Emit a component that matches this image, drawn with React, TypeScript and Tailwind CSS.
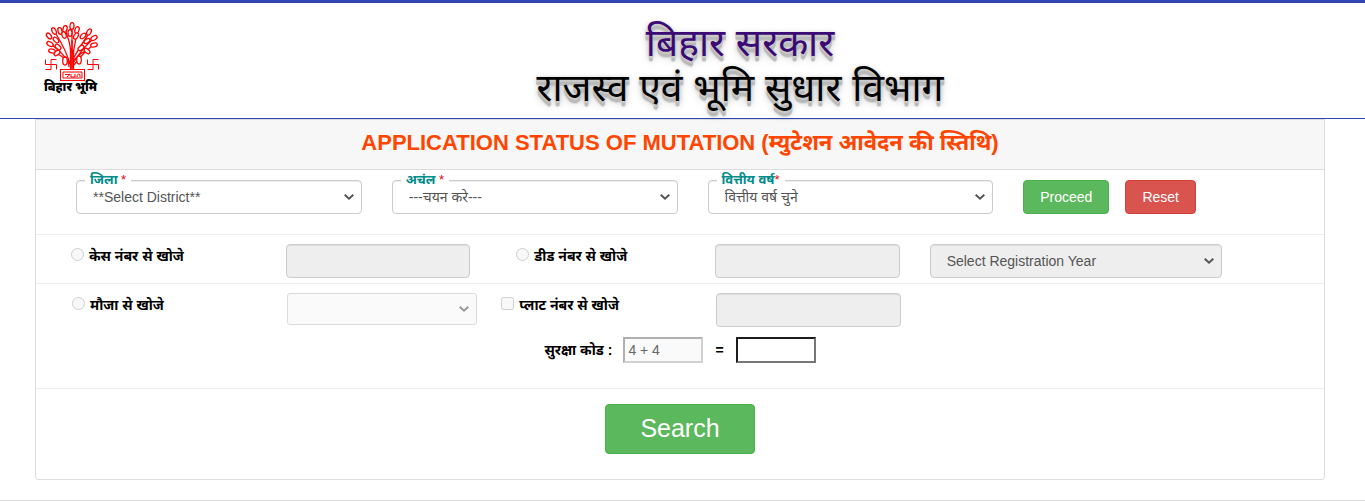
import type { ReactNode } from "react";

const control =
  "h-[34px] w-full rounded border border-[#ccc] px-3 text-sm text-[#555] shadow-[inset_0_1px_1px_rgba(0,0,0,0.075)]";

const leaves: [number, number, number][] = [
  [14, 9, -25], [9, 14, -40], [20, 9, -15], [25, 7, 15], [24, 13, -20], [32, 4, 5], [37, 8, 20],
  [36, 14, 30], [49, 10, 30], [43, 14, 45], [54, 16, 60], [47, 19, 55], [54, 23, 75],
  [10, 22, -60], [16, 18, -45], [12, 29, -75], [18, 25, -50], [47, 29, -50], [41, 26, 50],
  [17, 31, 50], [30, 11, 0],
];

function Logo() {
  return (
    <svg viewBox="0 0 60 72" className="h-[72px] w-[60px]" role="img" aria-label="बिहार भूमि">
      <g fill="none" stroke="#f00" strokeWidth="1.3">
        <path d="M29 45Q29 36 12 23M30 42Q26 28 16 12M31 30Q30 20 26 10M32 46V7M33 32Q35 22 37 10M33 37Q40 24 48 13M34 40Q41 28 52 18M34 43Q42 32 52 24M29 40Q22 34 13 29M34 38Q40 31 46 29" />
        {leaves.map(([x, y, a]) => (
          <ellipse key={`${x}-${y}`} cx={x} cy={y} rx="2" ry="3.400" fill="#fff" transform={`rotate(${a} ${x} ${y})`} />
        ))}
        <ellipse cx="25" cy="39" rx="2.300" ry="4" fill="#fff" />
        <ellipse cx="39" cy="38" rx="2.300" ry="4" fill="#fff" />
        <path d="M30.500 47V26M32 47V18M33.500 47V28" />
      </g>
      <g fill="none" stroke="#f00" strokeWidth="1">
        <rect x="20.500" y="47.500" width="24" height="11" />
        <path d="M23 50H42V56H23ZM25 52.500H30L27 55M31 52V55H35V52M37 55Q37 51 40 52.500V55" />
        <path d="M5.500 37.500V42.500H16.500V47.500M11 47.500V37.500H16.500M5.500 47.500H11" />
        <path d="M47.500 37.500V42.500H58.500V47.500M53 47.500V37.500H58.500M47.500 47.500H53" />
      </g>
      <text
        x="30.500"
        y="69"
        textAnchor="middle"
        fontSize="12"
        fontWeight="900"
        fontFamily="Noto Sans, sans-serif"
        fill="#000"
      >
        बिहार भूमि
      </text>
    </svg>
  );
}

function Chevron({ muted = false }: { muted?: boolean }) {
  return (
    <svg
      viewBox="0 0 10 7"
      aria-hidden="true"
      className={`pointer-events-none absolute top-1/2 right-2 h-[7px] w-[10px] -translate-y-1/2 ${muted ? "text-[#999]" : "text-[#555]"}`}
    >
      <path d="M0.700 1.200L5 5.200L9.300 1.200" fill="none" stroke="currentColor" strokeWidth="2" />
    </svg>
  );
}

function FloatingSelect({ id, label, star, option }: { id: string; label: string; star: string; option: string }) {
  return (
    <div className="relative">
      <label
        htmlFor={id}
        className="absolute -top-2 left-[9px] bg-white px-[5px] text-[13px] leading-4 font-bold text-[#008b8b]"
      >
        {label}
        <span className="font-normal text-red-600">{star}</span>
      </label>
      <select id={id} className={`${control} appearance-none bg-white pl-4`}>
        <option>{option}</option>
      </select>
      <Chevron />
    </div>
  );
}

function Choice({ id, type, children }: { id: string; type: "radio" | "checkbox"; children: ReactNode }) {
  return (
    <div className="flex items-start gap-[5px]">
      <input id={id} type={type} name={type === "radio" ? "searchBy" : id} disabled className="mt-1 size-[13px] shrink-0" />
      <label htmlFor={id} className="text-sm leading-6 font-bold whitespace-nowrap">
        {children}
      </label>
    </div>
  );
}

export default function App() {
  return (
    <div className="border-b border-[#ddd] bg-white pb-5 font-['Liberation_Sans','Noto_Sans',sans-serif] text-black">
      <header className="flex h-[119px] border-t-[3px] border-b border-t-[#2f43b5] border-b-[#2f43b5]">
        <div className="w-[115px] shrink-0 pt-[19px] pl-10">
          <Logo />
        </div>
        <h1 className="flex-1 pt-[17px] text-center text-[39px] leading-[45px] [text-shadow:0_1px_0_#ccc,0_2px_0_#c9c9c9,0_3px_0_#bbb,0_4px_0_#b9b9b9,0_5px_0_#bbb,0_6px_1px_rgba(0,0,0,.1),0_0_5px_rgba(0,0,0,.1),0_3px_5px_rgba(0,0,0,.2),0_5px_10px_rgba(0,0,0,.2)]">
          <span className="block text-[#3b0a75]">बिहार सरकार</span>
          <span className="block">राजस्व एवं भूमि सुधार विभाग</span>
        </h1>
      </header>

      <main className="mr-10 ml-[35px] rounded-b-[3px] border border-[#ddd]">
        <h2 className="h-[50px] border-b border-[#ddd] bg-[#f7f7f7] text-center text-[22px] leading-[46px] font-bold text-[#ff4500]">
          APPLICATION STATUS OF MUTATION (म्युटेशन आवेदन की स्तिथि)
        </h2>
        <form>
          <div className="grid grid-cols-4 gap-[30px] border-b border-[#eee] pt-[10px] pr-[15px] pb-5 pl-10">
            <FloatingSelect id="district" label="जिला" star=" *" option="**Select District**" />
            <FloatingSelect id="circle" label="अचंल" star=" *" option="---चयन करे---" />
            <FloatingSelect id="year" label="वित्तीय वर्ष" star="*" option="वित्तीय वर्ष चुने" />
            <div className="flex gap-4 text-sm text-white">
              <button type="button" className="h-[34px] rounded border border-[#4cae4c] bg-[#5cb85c] px-4">
                Proceed
              </button>
              <button type="reset" className="h-[34px] rounded border border-[#d43f3a] bg-[#d9534f] px-4">
                Reset
              </button>
            </div>
          </div>

          <div className="flex border-b border-[#eee] pt-[9px] pb-[5px]">
            <div className="ml-5 w-1/6 shrink-0 pl-[15px]">
              <Choice id="byCase" type="radio">केस नंबर से खोजे</Choice>
            </div>
            <div className="w-1/6 shrink-0 px-[15px]">
              <input aria-label="केस नंबर" disabled className={`${control} bg-[#eee]`} />
            </div>
            <div className="w-1/6 shrink-0 pl-[31px]">
              <Choice id="byDeed" type="radio">डीड नंबर से खोजे</Choice>
            </div>
            <div className="w-1/6 shrink-0 px-[15px]">
              <input aria-label="डीड नंबर" disabled className={`${control} bg-[#eee]`} />
            </div>
            <div className="w-1/4 shrink-0 px-[15px]">
              <div className="relative">
                <select
                  aria-label="Registration year"
                  disabled
                  className={`${control} appearance-none bg-[#eee] pl-4 opacity-100`}
                >
                  <option>Select Registration Year</option>
                </select>
                <Chevron />
              </div>
            </div>
          </div>

          <div className="flex pt-[9px]">
            <div className="ml-[21px] w-1/6 shrink-0 pl-[15px]">
              <Choice id="byMauza" type="radio">मौजा से खोजे</Choice>
            </div>
            <div className="w-1/6 shrink-0 pl-[15px]">
              <div className="relative w-[190px]">
                <select
                  aria-label="मौजा"
                  disabled
                  className="block h-8 w-full appearance-none rounded-[3px] border border-[#ccc] bg-[#f8f8f8] px-2 text-sm text-[#555] opacity-70"
                >
                  <option></option>
                </select>
                <Chevron muted />
              </div>
            </div>
            <div className="w-1/6 shrink-0 pl-[15px]">
              <Choice id="byPlot" type="checkbox">प्लाट नंबर से खोजे</Choice>
            </div>
            <div className="w-1/6 shrink-0 px-[15px]">
              <input aria-label="प्लाट नंबर" disabled className={`${control} bg-[#eee]`} />
            </div>
          </div>

          <div className="flex items-center justify-center border-b border-[#eee] pt-[10px] pb-[25px] text-sm font-bold">
            <label htmlFor="answer">सुरक्षा कोड :</label>
            <input
              aria-label="Security question"
              disabled
              defaultValue="4 + 4"
              className="ml-[11px] h-[26px] w-20 border-2 border-t-[#b0b0b0] border-r-[#d1d1d1] border-b-[#d1d1d1] border-l-[#b0b0b0] bg-[#fafafa] px-[3px] font-normal text-[#666]"
            />
            <span className="mx-3">=</span>
            <input
              id="answer"
              className="h-[26px] w-20 border-2 border-t-[#1c1c1c] border-r-[#767676] border-b-[#767676] border-l-[#1c1c1c] bg-white px-[3px]"
            />
          </div>

          <div className="flex justify-center pt-[15px] pb-[25px]">
            <button
              type="button"
              className="h-[50px] w-[150px] rounded border border-[#4cae4c] bg-[#5cb85c] text-[25px] text-white"
            >
              Search
            </button>
          </div>
        </form>
      </main>
    </div>
  );
}
